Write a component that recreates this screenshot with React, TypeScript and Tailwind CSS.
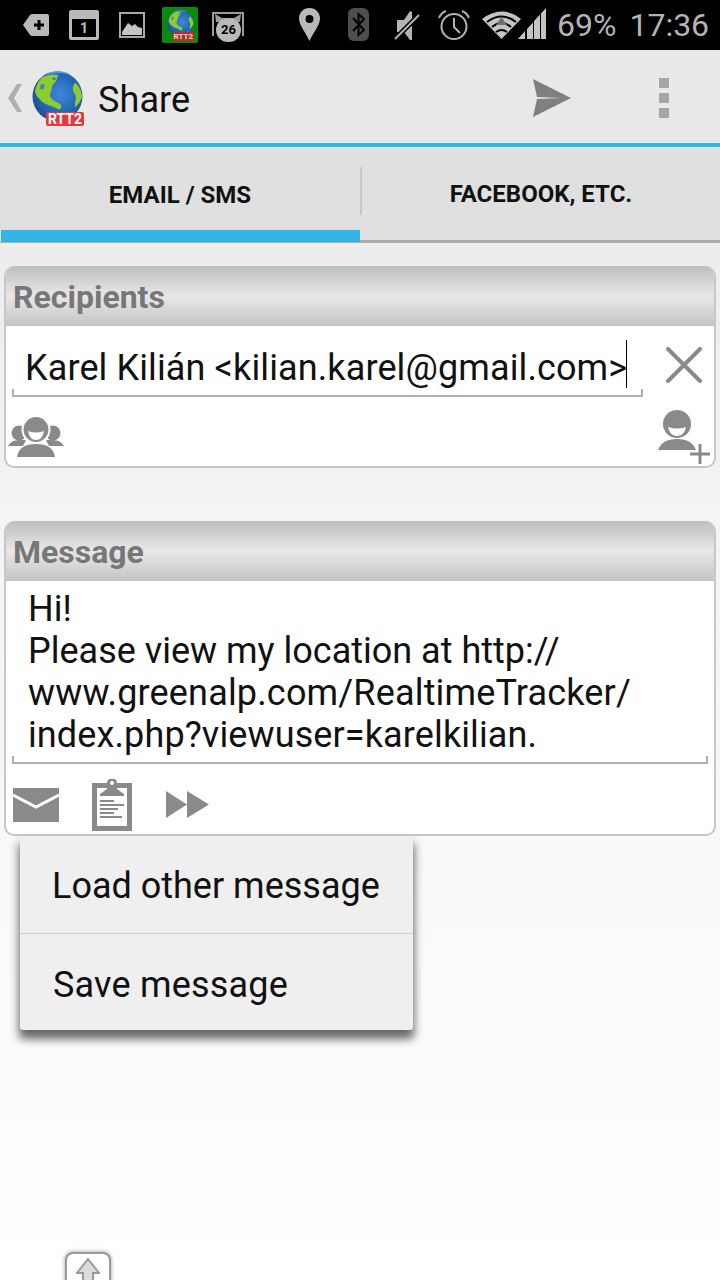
const font = { fontFamily: "Roboto, 'Noto Sans', sans-serif" };

function Globe({ size }: { size: number }) {
  return (
    <svg width={size} height={size} viewBox="0 0 52 52" className="block">
      <defs>
        <radialGradient id={`sea${size}`} cx="55%" cy="45%" r="60%">
          <stop offset="0%" stopColor="#3d88dc" />
          <stop offset="70%" stopColor="#2362ac" />
          <stop offset="100%" stopColor="#1a4a8a" />
        </radialGradient>
      </defs>
      <circle cx="26" cy="26" r="25.5" fill={`url(#sea${size})`} />
      <path d="M10 7 C16 3 22 3 27 4 C25 7 26 10 22 13 C19 16 21 21 18 24 C19 30 25 31 29 34 C31 38 28 41 25 38 C20 35 14 35 10 31 C6 27 4 25 3 21 C4 15 6 11 10 7 Z" fill="#8ccc2c" />
      <path d="M21 7 C24 6 25 7 24 9 C22 10 20 9 21 7 Z M9 14 C12 12 14 14 12 18 C9 20 7 18 9 14 Z" fill="#3f7fd0" />
      <path d="M44 12 C48 15 51 21 51 27 C49 32 46 35 44 37 C43 32 46 28 44 24 C41 21 41 15 44 12 Z" fill="#8ccc2c" />
      <path d="M36 44 C39 42 42 41 43 42 C41 45 38 47 35 48 Z" fill="#8ccc2c" />
      <path d="M10 5 C20 -1 32 -1 40 4 C30 1 20 2 10 5 Z" fill="#4c9be8" />
    </svg>
  );
}

function Mute() {
  return (
    <svg width="26" height="32" viewBox="0 0 26 32" fill="#b4b4b4">
      <path d="M3 10 L10 10 L16 1 L18 2 L18 30 L16 30 L10 22 L3 22 Z" />
      <path d="M1 29 L25 5" stroke="#000" strokeWidth="5" />
      <path d="M1 29 L25 5" stroke="#b4b4b4" strokeWidth="2" />
    </svg>
  );
}

function StatusBar() {
  return (
    <div className="flex h-[50px] items-start bg-black">
      <svg width="26" height="22" viewBox="0 0 26 22" className="ml-[23px] mt-[14px]">
        <path d="M0 11 L7 1 Q8 0 10 0 L24 0 Q26 0 26 2 L26 20 Q26 22 24 22 L10 22 Q8 22 7 21 Z" fill="#b9b9b9" />
        <path d="M11 11 H21 M16 6 V16" stroke="#000" strokeWidth="3" />
      </svg>
      <div className="ml-[20px] mt-[10px] flex h-[30px] w-[30px] flex-col rounded-[2px] bg-[#b9b9b9] px-[3px] pb-[3px] pt-[9px]">
        <div className="flex flex-1 items-center justify-center bg-black text-[15px] font-bold leading-none text-[#b9b9b9]" style={font}>1</div>
      </div>
      <svg width="26" height="26" viewBox="0 0 26 26" className="ml-[20px] mt-[12px]">
        <rect x="1" y="1" width="24" height="24" fill="none" stroke="#a8a8a8" strokeWidth="2" />
        <path d="M3 20 L9 11 L13 14 L16 12 L19 15 L23 16 L23 23 L3 23 Z" fill="#c4c4c4" />
      </svg>
      <div className="relative ml-[17px] mt-[7px] h-[36px] w-[36px] rounded-[2px] bg-[#0a8a0a]">
        <div className="absolute left-[5px] top-[3px]"><Globe size={27} /></div>
        <span className="absolute bottom-[2px] right-[4px] bg-[#b5302c] px-[1px] text-[8px] font-bold leading-[9px] text-[#f0d0c8]" style={font}>RTT2</span>
      </div>
      <div className="relative ml-[14px] mt-[12px] h-[30px] w-[32px]">
        <svg width="32" height="26" viewBox="0 0 32 26" className="absolute left-0 top-0">
          <path d="M1 24 V1 H31 V24" fill="none" stroke="#9a9a9a" strokeWidth="2" />
          <path d="M4 10 L3 2 L10 6 H22 L29 2 L28 10 Z" fill="#9a9a9a" />
        </svg>
        <div className="absolute left-[4px] top-[6px] flex h-[24px] w-[25px] items-center justify-center rounded-full bg-[#b9b9b9] text-[13px] font-bold text-black" style={font}>26</div>
      </div>
      <svg width="21" height="33" viewBox="0 0 21 33" className="ml-[55px] mt-[8px]">
        <path fillRule="evenodd" d="M10.5 0 C17 0 21 5 21 10.5 C21 17 14 25 10.5 33 C7 25 0 17 0 10.5 C0 5 4 0 10.5 0 Z M10.5 7 A4 4 0 1 0 10.5 15 A4 4 0 1 0 10.5 7 Z" fill="#b9b9b9" />
      </svg>
      <svg width="21" height="33" viewBox="0 0 21 33" className="ml-[28px] mt-[8px]">
        <rect width="21" height="33" rx="6" fill="#4e4e4e" />
        <path d="M5 10 L16 22 L10.5 27 V6 L16 11 L5 23" fill="none" stroke="#000" strokeWidth="2" />
      </svg>
      <div className="ml-[25px] mt-[10px]"><Mute /></div>
      <svg width="32" height="30" viewBox="0 0 32 30" className="ml-[18px] mt-[10px]" fill="none" stroke="#b4b4b4">
        <circle cx="16" cy="16.5" r="12.5" strokeWidth="2" />
        <path d="M16 8 V17 L22 23" strokeWidth="2" />
        <path d="M1 8 Q3 3 8 1 M31 8 Q29 3 24 1" strokeWidth="2" />
      </svg>
      <svg width="39" height="29" viewBox="0 0 39 29" className="ml-[12px] mt-[10px]">
        <path d="M0 9 Q19.5 -6 39 9 L19.5 29 Z" fill="#c4c4c4" />
        <path d="M5 12 Q19.5 1 34 12 M10 17 Q19.5 9 29 17 M14 22 Q19.5 18 25 22" fill="none" stroke="#000" strokeWidth="2" />
        <path d="M19.5 7 L25 15 H14 Z" fill="#6e6e6e" />
      </svg>
      <svg width="28" height="31" viewBox="0 0 28 31" className="ml-[-3px] mt-[8px]">
        <path d="M0 31 L7 23 V31 Z M9 31 V21 L15 14.4 V31 Z M16 31 V13 L22 6.6 V31 Z M23 31 V5.5 L28 0 V31 Z" fill="#c4c4c4" />
      </svg>
      <span className="ml-[11px] mt-[7px] text-[32px] leading-[37px] text-[#b4b4b4]" style={font}>69%</span>
      <span className="ml-[13px] mt-[7px] text-[32px] leading-[37px] text-[#b4b4b4]" style={font}>17:36</span>
    </div>
  );
}

function ActionBar() {
  return (
    <div className="flex h-[93px] items-center bg-[#e8e8e8]">
      <svg width="14" height="28" viewBox="0 0 14 28" className="ml-[8px] mt-[2px]">
        <path d="M14 0 H9 L0 14 L9 28 H14 L6 14 Z" fill="#aeaeae" />
      </svg>
      <div className="relative ml-[10px] mt-[4px] h-[55px] w-[52px]">
        <Globe size={51} />
        <span className="absolute bottom-0 right-0 rounded-[2px] bg-[#e8383c] px-[2px] text-[14px] font-bold leading-[14px] text-white" style={font}>RTT2</span>
      </div>
      <span className="ml-[14px] mt-[7px] text-[36px] tracking-[0.1px] text-[#111]" style={font}>Share</span>
      <svg width="38" height="38" viewBox="0 0 38 38" className="ml-[343px] mt-[3px]">
        <path d="M0 0 L38 19 L0 38 L4 20 L28 19 L4 18 Z" fill="#808080" />
      </svg>
      <div className="ml-[88px] mt-[3px] flex flex-col gap-[5px]">
        <div className="h-[10px] w-[10px] bg-[#a6a6a6]" />
        <div className="h-[10px] w-[10px] bg-[#a6a6a6]" />
        <div className="h-[10px] w-[10px] bg-[#a6a6a6]" />
      </div>
    </div>
  );
}

function Tabs() {
  return (
    <div className="flex h-[100px] border-t-[4px] border-[#33b5e5] bg-[#e0e0e0]">
      <div className="relative flex w-[360px] items-center justify-center border-b-[1px] border-[#adadad] pt-[1px]">
        <span className="text-[24px] font-bold leading-none text-[#111]" style={font}>EMAIL / SMS</span>
        <div className="absolute bottom-0 left-[1px] right-0 h-[12px] bg-[#33b5e5]" />
      </div>
      <div className="flex w-[2px] flex-col border-b-[3px] border-[#adadad]">
        <div className="mt-[20px] h-[48px] w-[2px] bg-[#c8c8c8]" />
      </div>
      <div className="flex flex-1 items-center justify-center border-b-[3px] border-[#adadad] pt-[1px]">
        <span className="text-[24px] font-bold leading-none text-[#111]" style={font}>FACEBOOK, ETC.</span>
      </div>
    </div>
  );
}

function Card({ title, children }: { title: string; children: React.ReactNode }) {
  return (
    <div className="mx-[4px] overflow-hidden rounded-[10px] border-b-[2px] border-l-[2px] border-r-[2px] border-[#c8c8c8] bg-white">
      <div className="-mx-[2px] flex h-[60px] items-center bg-gradient-to-b from-[#bebebe] via-[#e8e8e8] to-[#c4c4c4] pl-[9px]">
        <span className="mt-[2px] text-[32px] font-bold leading-none text-[#777]" style={font}>{title}</span>
      </div>
      {children}
    </div>
  );
}

function GroupIcon() {
  return (
    <svg width="56" height="40" viewBox="0 0 56 40" fill="#8a8a8a">
      <circle cx="11" cy="16" r="7.5" />
      <circle cx="45" cy="16" r="7.5" />
      <path d="M0 29 Q3 23 11 23 L18 23 L15 29 Z M56 29 Q53 23 45 23 L38 23 L41 29 Z" />
      <circle cx="28" cy="12.5" r="13.5" stroke="#fff" strokeWidth="2" />
      <path d="M20 14 Q28 17 36 14 Q34.5 23 28 23 Q21.5 23 20 14 Z" fill="#fff" />
      <path d="M9 40 Q11 27 28 27 Q45 27 47 40 Z" />
    </svg>
  );
}

function PersonAddIcon() {
  return (
    <svg width="52" height="54" viewBox="0 0 52 54">
      <circle cx="19" cy="14" r="14" fill="#8a8a8a" />
      <path d="M10 17 Q19 20 28 17 Q26 26 19 26 Q12 26 10 17 Z" fill="#fff" />
      <path d="M0 40 Q4 29 19 29 Q34 29 38 40 Z" fill="#8a8a8a" />
      <path d="M32 44 H52 M42 34 V54" stroke="#8a8a8a" strokeWidth="3" />
    </svg>
  );
}

export default function App() {
  return (
    <div className="flex h-[1280px] w-[720px] flex-col overflow-hidden bg-gradient-to-b from-[#e8e8e8] via-[#f6f6f6] to-white" style={font}>
      <StatusBar />
      <ActionBar />
      <Tabs />

      <div className="relative flex-1 pt-[23px]">
        <Card title="Recipients">
          <div className="flex h-[140px] flex-col">
            <div className="flex h-[82px] items-start">
              <div className="relative ml-[6px] flex h-[71px] w-[631px] items-end border-b-[2px] border-[#b0b0b0] pb-[6px] pl-[13px]">
                <span className="text-[36px] leading-[42px] tracking-[0.12px] text-[#111]">Karel Kilián &lt;kilian.karel@gmail.com&gt;</span>
                <div className="mb-[1px] ml-[-1px] h-[48px] w-[1px] self-end bg-black" />
                <div className="absolute bottom-0 left-0 h-[6px] w-[2px] bg-[#b0b0b0]" />
                <div className="absolute bottom-0 right-0 h-[6px] w-[2px] bg-[#b0b0b0]" />
              </div>
              <svg width="36" height="36" viewBox="0 0 36 36" className="ml-[23px] mt-[21px]">
                <path d="M2 2 L34 34 M34 2 L2 34" stroke="#8a8a8a" strokeWidth="4" strokeLinecap="round" />
              </svg>
            </div>
            <div className="flex items-start justify-between">
              <div className="ml-[2px] mt-[9px]"><GroupIcon /></div>
              <div className="mr-[4px] mt-[2px]"><PersonAddIcon /></div>
            </div>
          </div>
        </Card>

        <div className="mt-[53px]">
          <Card title="Message">
            <div className="flex h-[253px] flex-col">
              <div className="relative ml-[6px] mr-[6px] h-[183px] border-b-[2px] border-[#b0b0b0] pl-[16px] pt-[7px] text-[36px] leading-[42px] text-[#111]">
                <p>Hi!</p>
                <p>Please view my location at http://</p>
                <p className="tracking-[0.17px]">www.greenalp.com/RealtimeTracker/</p>
                <p className="tracking-[0.12px]">index.php?viewuser=karelkilian.</p>
                <div className="absolute bottom-0 left-0 h-[6px] w-[2px] bg-[#b0b0b0]" />
                <div className="absolute bottom-0 right-0 h-[6px] w-[2px] bg-[#b0b0b0]" />
              </div>
              <div className="flex items-start">
                <svg width="46" height="34" viewBox="0 0 46 34" className="ml-[7px] mt-[24px]">
                  <rect width="46" height="34" fill="#8a8a8a" />
                  <path d="M0 7 L23 19 L46 7" fill="none" stroke="#fff" strokeWidth="3" />
                </svg>
                <svg width="40" height="52" viewBox="0 0 40 52" className="ml-[33px] mt-[15px]">
                  <rect y="4" width="40" height="48" fill="#8a8a8a" />
                  <rect x="5" y="9" width="30" height="38" fill="#fff" />
                  <path d="M8 15 L15 10 V4 A5 5 0 0 1 25 4 V10 L32 15 V17 H8 Z" fill="#8a8a8a" />
                  <circle cx="20" cy="4" r="2" fill="#fff" />
                  <path d="M8 22 H22 M8 26 H32 M8 30 H26 M8 34 H22 M8 38 H30" stroke="#8a8a8a" strokeWidth="2" />
                </svg>
                <svg width="43" height="27" viewBox="0 0 43 27" className="ml-[34px] mt-[27px]" fill="#8a8a8a">
                  <path d="M0 0 L21 13.5 L0 27 Z M21 0 L43 13.5 L21 27 Z" />
                </svg>
              </div>
            </div>
          </Card>
          <div className="absolute left-[20px] top-[593px] z-10 w-[393px] rounded-[3px] bg-[#efefef] shadow-[0_8px_10px_1px_rgba(0,0,0,0.6)]">
            <div className="flex h-[98px] items-center border-b-[1px] border-[#d0d0d0] pl-[32px] pt-[2px] text-[36px] text-[#111]">Load other message</div>
            <div className="flex h-[96px] items-center pl-[33px] pt-[5px] text-[36px] tracking-[0.2px] text-[#111]">Save message</div>
          </div>
        </div>

        <div className="absolute left-[65px] top-[1009px] flex h-[60px] w-[46px] items-start justify-center rounded-[8px] border-[2px] border-[#9a9a9a] bg-white pt-[4px] blur-[0.6px] shadow-[0_0_4px_rgba(0,0,0,0.4)]">
          <svg width="24" height="28" viewBox="0 0 24 28">
            <path d="M12 1 L23 15 H17 V28 H7 V15 H1 Z" fill="#dcdcdc" stroke="#999" strokeWidth="2" />
          </svg>
        </div>
      </div>
    </div>
  );
}
